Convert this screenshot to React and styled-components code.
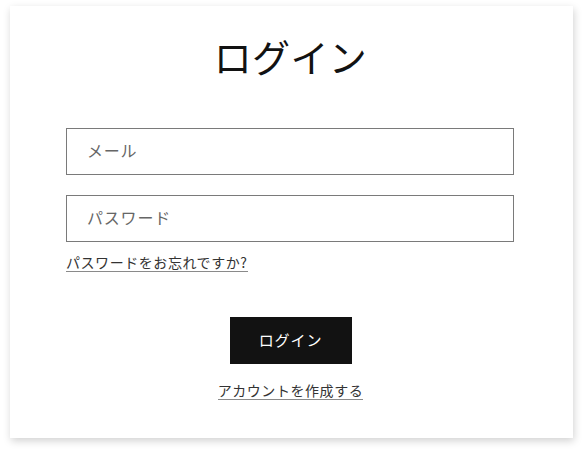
import React from "react";
import styled, { createGlobalStyle } from "styled-components";

const GlobalStyle = createGlobalStyle`
  * { margin: 0; padding: 0; box-sizing: border-box; }
  body {
    background: #ffffff;
    font-family: "Noto Sans CJK JP", "Noto Sans", sans-serif;
    color: #121212;
  }
`;

const Page = styled.main`
  padding: 6px 10px 15px 10px;
`;

const Card = styled.form`
  width: 563px;
  height: 432px;
  background: #ffffff;
  box-shadow: 1px 3px 8px rgba(0, 0, 0, 0.18);
  padding: 26px 58px 0 56px;
  display: flex;
  flex-direction: column;
`;

const Title = styled.h1`
  font-size: 38px;
  line-height: 48px;
  font-weight: 400;
  text-align: center;
  letter-spacing: 0.01em;
  color: #121212;
  margin-bottom: 48px;
`;

const Fields = styled.div`
  display: flex;
  flex-direction: column;
  gap: 20px;
`;

const Input = styled.input`
  width: 448px;
  height: 47px;
  border: 1px solid #7a7a7a;
  border-radius: 0;
  padding: 0 20px 3px;
  font-family: inherit;
  font-size: 16px;
  letter-spacing: 0.05em;
  color: #121212;
  background: #fff;
  outline: none;
  &::placeholder { color: #666666; }
`;

const TextLink = styled.a`
  align-self: ${(p) => (p.$center ? "center" : "flex-start")};
  display: inline-block;
  font-size: 14px;
  line-height: 18px;
  letter-spacing: 0.04em;
  color: #333333;
  text-decoration: none;
  border-bottom: 1px solid #8a8a8a;
  margin-top: ${(p) => p.$top}px;
`;

const Actions = styled.div`
  display: flex;
  flex-direction: column;
  align-items: center;
  margin-top: 45px;
`;

const Button = styled.button`
  width: 122px;
  height: 47px;
  padding-bottom: 2px;
  background: #121212;
  color: #ffffff;
  border: none;
  font-family: inherit;
  font-size: 15px;
  letter-spacing: 0.06em;
  cursor: pointer;
`;

export default function App() {
  return (
    <>
      <GlobalStyle />
      <Page>
        <Card onSubmit={(e) => e.preventDefault()}>
          <Title>ログイン</Title>
          <Fields>
            <Input type="email" name="email" placeholder="メール" />
            <Input type="password" name="password" placeholder="パスワード" />
          </Fields>
          <TextLink href="#" $top={11}>パスワードをお忘れですか?</TextLink>
          <Actions>
            <Button type="submit">ログイン</Button>
            <TextLink href="#" $center $top={17}>アカウントを作成する</TextLink>
          </Actions>
        </Card>
      </Page>
    </>
  );
}
